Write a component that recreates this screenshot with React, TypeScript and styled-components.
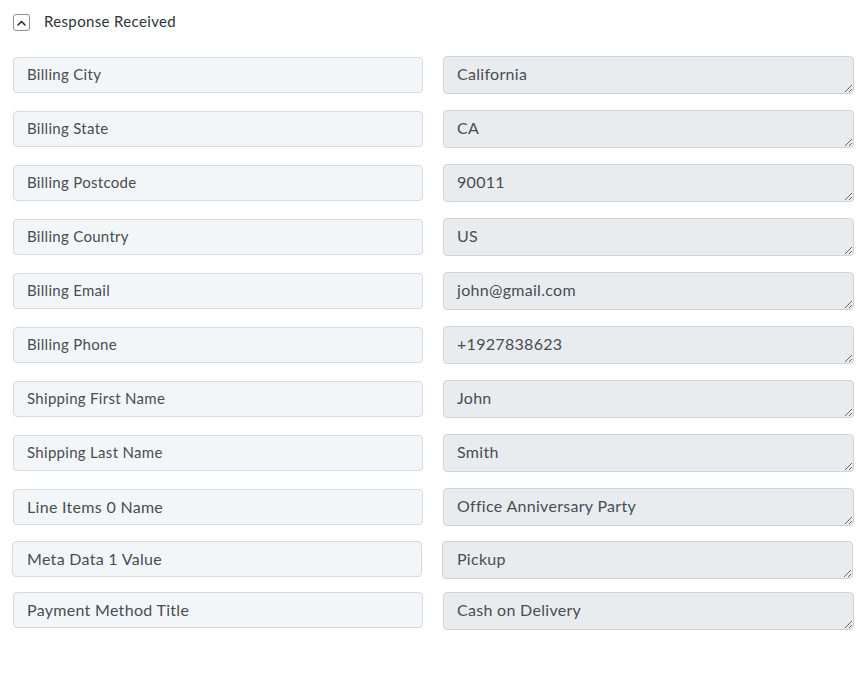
import React from "react";
import styled, { createGlobalStyle } from "styled-components";

const Global = createGlobalStyle`
  html, body { margin: 0; padding: 0; background: #fff; }
  body { font-family: Lato, "Segoe UI", "Liberation Sans", sans-serif; }
`;

const Page = styled.div`
  padding: 14px 8px 0 13px;
  display: flex;
  flex-direction: column;
`;

const Header = styled.div`
  display: flex;
  align-items: center;
  gap: 14px;
  height: 17px;
  margin-bottom: 25px;
`;

const Toggle = styled.button`
  width: 17px;
  height: 17px;
  padding: 0;
  border: 1px solid #8a8f95;
  border-radius: 3px;
  background: #fff;
  display: flex;
  align-items: center;
  justify-content: center;
  box-sizing: border-box;
`;

const Title = styled.span`
  font-size: 15px;
  line-height: 17px;
  margin-top: -2px;
  color: #2f3337;
  letter-spacing: 0.35px;
`;

const List = styled.div`
  display: flex;
  flex-direction: column;
  gap: 16px;
`;

const Row = styled.div<{ $lift: number; $shift: number }>`
  display: grid;
  grid-template-columns: 410px 411px;
  column-gap: 20px;
  align-items: start;
  margin-top: ${(p) => -p.$lift}px;
  margin-left: ${(p) => -p.$shift}px;
`;

const Label = styled.input<{ $drop: number; $size: number; $pad: number }>`
  box-sizing: border-box;
  height: 36px;
  margin: ${(p) => p.$drop}px 0 0;
  padding: 0 13px 2px ${(p) => p.$pad}px;
  border: 1px solid #d5dae0;
  border-radius: 4px;
  background: #f3f6f9;
  color: #474d53;
  font-family: inherit;
  font-size: ${(p) => p.$size}px;
  letter-spacing: 0.3px;
  outline: none;
`;

const Value = styled.textarea<{ $pad: number }>`
  box-sizing: border-box;
  height: 38px;
  margin: 0;
  padding: 5px 13px 7px ${(p) => p.$pad}px;
  border: 1px solid #ced4da;
  border-radius: 4px;
  background: #e9ecef;
  color: #474d53;
  font-family: inherit;
  font-size: 16px;
  line-height: 24px;
  letter-spacing: 0.3px;
  resize: vertical;
  overflow: hidden;
  outline: none;
  display: block;
`;

const fields: {
  label: string;
  value: string;
  lift?: number;
  shift?: number;
  drop?: number;
  big?: boolean;
}[] = [
  { label: "Billing City", value: "California" },
  { label: "Billing State", value: "CA" },
  { label: "Billing Postcode", value: "90011" },
  { label: "Billing Country", value: "US" },
  { label: "Billing Email", value: "john@gmail.com" },
  { label: "Billing Phone", value: "+1927838623" },
  { label: "Shipping First Name", value: "John" },
  { label: "Shipping Last Name", value: "Smith" },
  { label: "Line Items 0 Name", value: "Office Anniversary Party", big: true },
  { label: "Meta Data 1 Value", value: "Pickup", lift: 1, shift: 1, drop: 0, big: true },
  { label: "Payment Method Title", value: "Cash on Delivery", lift: 3, drop: 0, big: true },
];

export default function App() {
  return (
    <>
      <Global />
      <Page>
        <Header>
          <Toggle aria-label="collapse">
            <svg width="9" height="6" viewBox="0 0 9 6" fill="none">
              <path d="M1 5 L4.5 1.5 L8 5" stroke="#2b2f33" strokeWidth="1.6" strokeLinecap="round" strokeLinejoin="round" />
            </svg>
          </Toggle>
          <Title>Response Received</Title>
        </Header>
        <List>
          {fields.map((f) => {
            const shift = f.shift ?? 0;
            return (
              <Row key={f.label} $lift={f.lift ?? 0} $shift={shift}>
                <Label
                  readOnly
                  value={f.label}
                  $drop={f.drop ?? 1}
                  $size={f.big ? 16 : 15}
                  $pad={13 + shift}
                />
                <Value readOnly rows={1} value={f.value} $pad={13 + shift} />
              </Row>
            );
          })}
        </List>
      </Page>
    </>
  );
}
